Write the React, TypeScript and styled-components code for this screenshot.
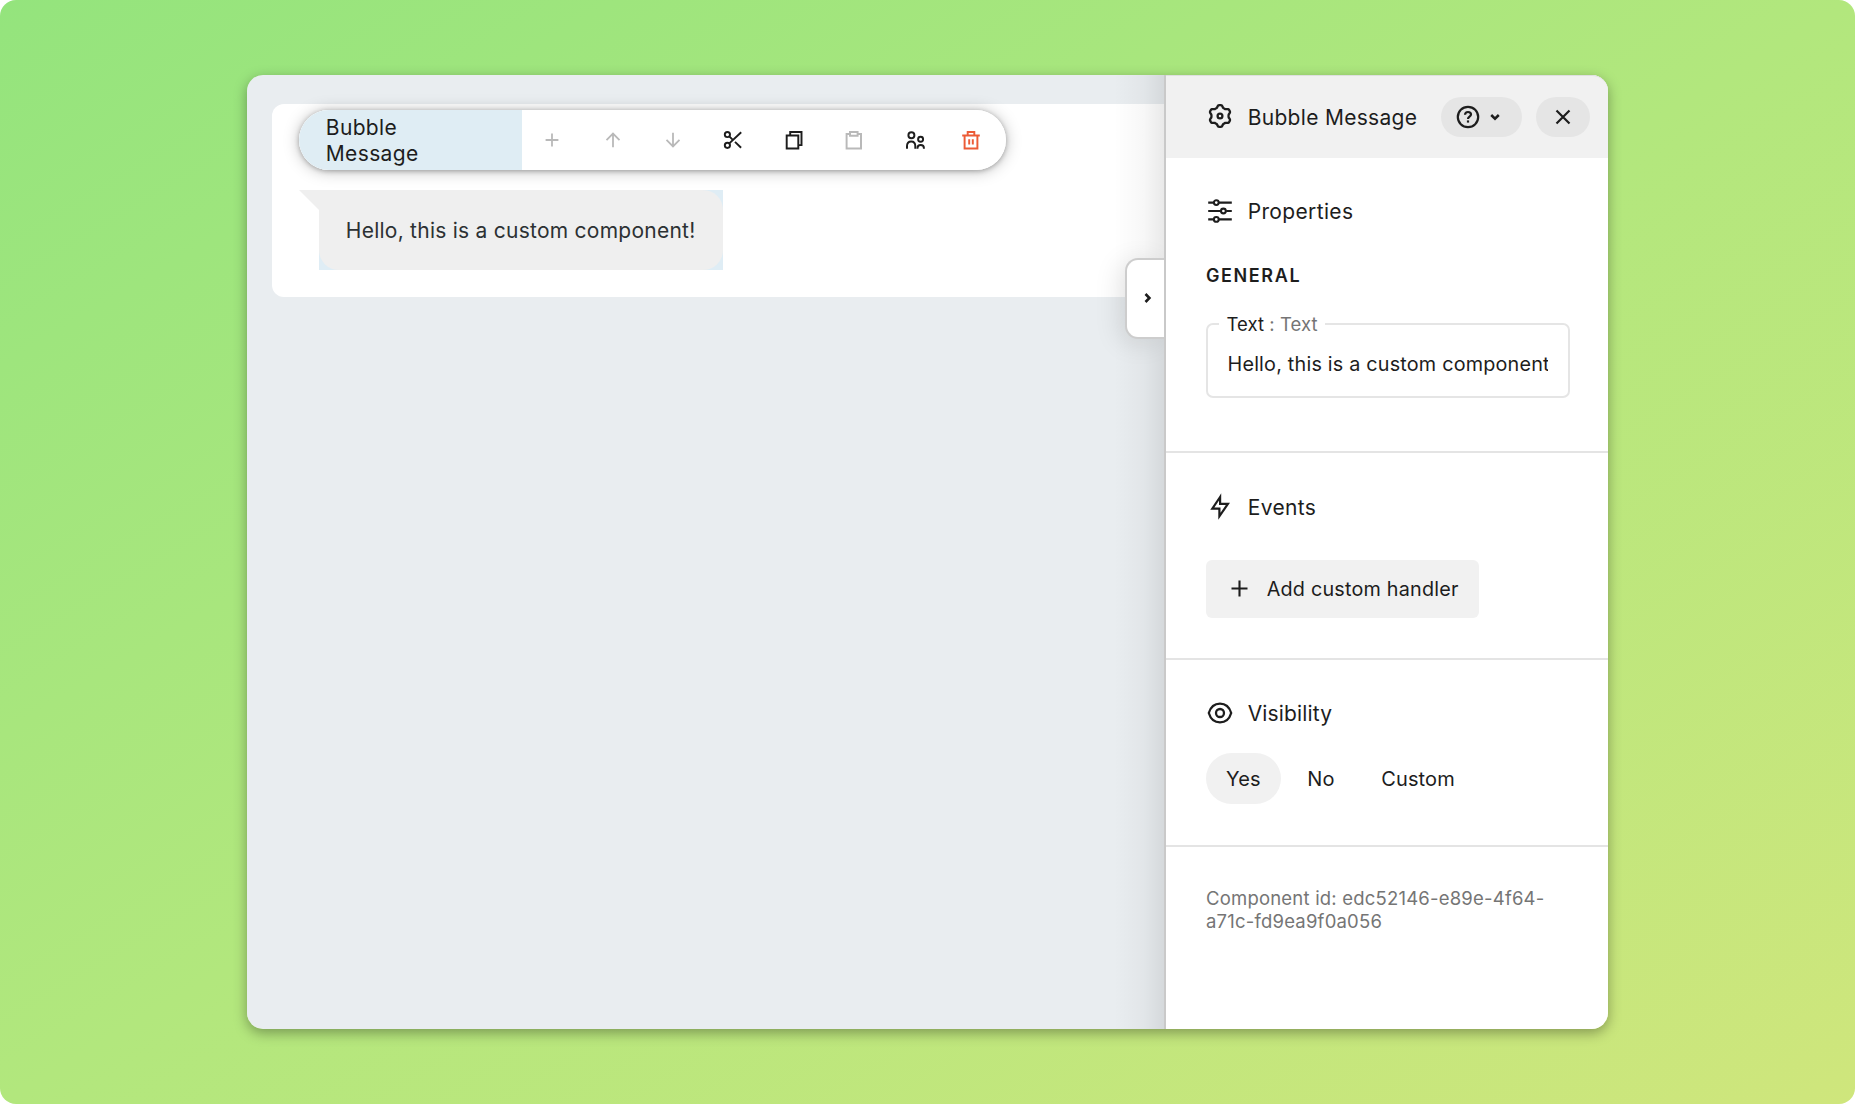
import React from "react";
import type { ReactNode } from "react";
import styled, { createGlobalStyle } from "styled-components";

const GlobalStyle = createGlobalStyle`
  *, *::before, *::after { box-sizing: border-box; }
  body { margin: 0; background: #fff; }
  button, input { font: inherit; letter-spacing: inherit; color: inherit; }
`;

const Page = styled.div`
  width: 100%;
  height: 100vh;
  padding: 75px 247px;
  border-radius: 16px;
  background: linear-gradient(to bottom right, #94e47d 0%, #b2e77d 50%, #cfe67c 100%);
  font-family: Inter, "Noto Sans", sans-serif;
  color: #1d1d1d;
`;

const Window = styled.div`
  display: flex;
  height: 954px;
  border-radius: 16px;
  box-shadow: 0 4px 13px rgba(0, 0, 0, 0.34);
`;

const Canvas = styled.main`
  flex: 1;
  min-width: 0;
  padding: 28.7px 0 0 25px;
  background: #e9edf0;
  border-radius: 16px 0 0 16px;
`;

const Block = styled.section`
  position: relative;
  height: 193.3px;
  padding: 86.3px 0 0 47px;
  background: #fff;
  border-radius: 12px 0 0 12px;
`;

const ToolbarShadow = styled.div`
  position: absolute;
  left: 27px;
  top: 6px;
  width: 707px;
  height: 60px;
  border-radius: 30px;
  box-shadow: 0 1px 16px rgba(0, 0, 0, 0.26), 0 1px 5px rgba(0, 0, 0, 0.28);
`;

const Toolbar = styled.div`
  position: absolute;
  left: 27px;
  top: 6px;
  display: flex;
  width: 707px;
  height: 60px;
  border-radius: 30px;
  background: #fff;
  overflow: hidden;
`;

const ToolbarName = styled.div`
  display: flex;
  align-items: center;
  width: 223px;
  padding: 2px 88px 0 26.8px;
  background: #dfedf4;
  font-size: 21px;
  line-height: 26px;
  letter-spacing: 0.35px;
`;

const Tools = styled.div`
  display: flex;
  align-items: center;
`;

const Tool = styled.button<{ $tone?: "muted" | "danger" }>`
  display: flex;
  align-items: center;
  justify-content: center;
  width: ${(p) => (p.$tone === "danger" ? "53px" : "60.4px")};
  height: 60px;
  padding: 0;
  border: 0;
  background: none;
  color: ${(p) => (p.$tone === "muted" ? "#b9b9b9" : p.$tone === "danger" ? "#ec5b36" : "#1d1d1d")};
`;

const Selection = styled.div`
  display: inline-block;
  height: 80px;
  background: #dfedf5;
`;

const Bubble = styled.div`
  position: relative;
  display: flex;
  align-items: center;
  width: 404px;
  height: 80px;
  padding: 1px 0 0 26.8px;
  border-radius: 0 20px 20px 20px;
  background: #efefef;
  color: #2c3133;
  font-size: 21px;
  letter-spacing: 0.25px;
  white-space: nowrap;

  &::before {
    content: "";
    position: absolute;
    left: -20px;
    top: 0;
    border: 10px solid transparent;
    border-top-color: #efefef;
    border-right-color: #efefef;
  }
`;

const Panel = styled.aside`
  position: relative;
  display: flex;
  flex-direction: column;
  width: 444px;
  border-left: 2px solid #c9c9c9;
  border-radius: 0 16px 16px 0;
  background: #fff;
`;

const PanelShade = styled.div`
  position: absolute;
  left: -52px;
  top: 0;
  bottom: 0;
  width: 50px;
  background: linear-gradient(to left, rgba(0, 0, 0, 0.085), rgba(0, 0, 0, 0.03) 40%, transparent);
  pointer-events: none;
`;

const CollapseTab = styled.button`
  position: absolute;
  left: -41px;
  top: 183px;
  display: flex;
  align-items: center;
  width: 39px;
  height: 81px;
  padding: 0 0 2px 17px;
  border: 2px solid #cdcdcd;
  border-right: 0;
  border-radius: 13px 0 0 13px;
  background: #fff;
  box-shadow: -6px 4px 26px rgba(0, 0, 0, 0.1);
  clip-path: inset(-50px 0 -50px -50px);
`;

const PanelHeader = styled.header`
  display: flex;
  align-items: flex-start;
  height: 82.5px;
  padding: 22px 18.5px 0 40px;
  border-top: 1px solid #dedfdf;
  border-radius: 0 16px 0 0;
  background: #f1f1f1;
`;

const IconSlot = styled.span`
  display: flex;
  align-items: center;
  justify-content: center;
  width: 28px;
  height: 28px;
  margin-right: 13.7px;
`;

const PanelTitle = styled.h1`
  display: flex;
  align-items: center;
  flex: 1;
  height: 36px;
  margin: 0;
  font-size: 21px;
  font-weight: 400;
  letter-spacing: 0.3px;
  white-space: nowrap;
`;

const TitleText = styled.span`
  padding-top: 3px;
`;

const HeaderButton = styled.button<{ $width: number; $shift?: number }>`
  display: flex;
  align-items: center;
  justify-content: center;
  gap: 10px;
  width: ${(p) => p.$width}px;
  height: 40px;
  margin: -1px 0 0 14px;
  padding: 0 ${(p) => p.$shift ?? 0}px 0 0;
  border: 0;
  border-radius: 20px;
  background: #e5e5e5;
`;

const Section = styled.section<{ $height: number; $top: number }>`
  height: ${(p) => p.$height}px;
  padding: ${(p) => p.$top}px 38.5px 0 40px;
  border-bottom: 2px solid #e4e4e4;
`;

const SectionTitle = styled.h2<{ $tracking?: number }>`
  display: flex;
  align-items: center;
  height: 28px;
  margin: 0;
  font-size: 21px;
  font-weight: 400;
  line-height: 28px;
  letter-spacing: ${(p) => p.$tracking ?? 0.35}px;
`;

const TitleLabel = styled.span`
  padding-top: 2px;
`;

const GroupTitle = styled.h3`
  margin: 39px 0 0;
  font-size: 18px;
  font-weight: 600;
  line-height: 24px;
  letter-spacing: 1.6px;
`;

const Field = styled.fieldset`
  height: 86px;
  margin: 24px 0 0;
  padding: 0 19.5px;
  border: 2px solid #e5e5e5;
  border-radius: 7px;
`;

const FieldLabel = styled.legend`
  margin-left: -8.5px;
  padding: 0 7px 0 7.5px;
  font-size: 18.5px;
  line-height: 24px;
  letter-spacing: 0.05px;
`;

const Muted = styled.span`
  color: #757575;
`;

const FieldInput = styled.input`
  display: block;
  width: 100%;
  height: 30px;
  margin-top: 12.5px;
  padding: 0;
  border: 0;
  outline: 0;
  background: none;
  font-size: 19.8px;
  letter-spacing: 0.2px;
`;

const AddButton = styled.button`
  display: flex;
  align-items: center;
  gap: 18.7px;
  width: 273px;
  height: 58px;
  margin-top: 39px;
  padding: 0 0 0 25px;
  border: 0;
  border-radius: 6px;
  background: #f1f1f1;
  font-size: 19.8px;
  letter-spacing: 0.2px;
  white-space: nowrap;
`;

const Options = styled.div`
  display: flex;
  gap: 6px;
  margin-top: 26px;
`;

const Option = styled.button<{ $active?: boolean }>`
  height: 51px;
  padding: 0 20.4px 0 20.1px;
  border: 0;
  border-radius: 26px;
  background: ${(p) => (p.$active ? "#f1f1f1" : "transparent")};
  font-size: 20px;
  letter-spacing: 0.15px;
`;

const ComponentId = styled.p`
  width: 350px;
  margin: 40.500px 0 0 40px;
  color: #757575;
  font-size: 18.5px;
  line-height: 22.5px;
  letter-spacing: 0.2px;
`;

interface IconProps {
  w?: number;
  h?: number;
  sw?: number;
  children: ReactNode;
}

const Icon = ({ w = 24, h = 24, sw = 1.95, children }: IconProps) => (
  <svg width={w} height={h} viewBox={`0 0 ${w} ${h}`} fill="none" stroke="currentColor" strokeWidth={sw}>
    {children}
  </svg>
);

const PlusIcon = () => (
  <Icon sw={1.8}><path d="M12 5.6v12.800M5.600 12h12.800" /></Icon>
);
const UpIcon = () => (
  <Icon sw={1.8}><path d="M12 19.3V5.6M5.5 12.100 12 5.600l6.500 6.500" /></Icon>
);
const DownIcon = () => (
  <Icon sw={1.8}><path d="M12 4.700v13.700M5.500 11.900l6.500 6.500 6.500-6.500" /></Icon>
);
const CutIcon = () => (
  <Icon>
    <circle cx="6.4" cy="6.5" r="2.6" />
    <circle cx="6.4" cy="17.3" r="2.6" />
    <path d="M8.300 15.400 20.200 4.200M8.300 8.400l3.800 3.700M14 13.900l6.100 5.800" />
  </Icon>
);
const CopyIcon = () => (
  <Icon>
    <path d="M4.700 7.400h11.600v13H4.700zM8.200 7.400V3.900h11.300v13.200h-3.200" />
  </Icon>
);
const PasteIcon = () => (
  <Icon>
    <path d="M8 6H4.600v14.400H19V6h-3.400" />
    <path d="M8 4h7.600v3.800H8z" />
  </Icon>
);
const UsersIcon = () => (
  <Icon>
    <circle cx="8.4" cy="7.3" r="3" />
    <path d="M4 20.800v-2.700c0-3 1.700-4.600 4.200-4.600s4.100 1.600 4.100 4.600v2.700" />
    <circle cx="17.6" cy="11.3" r="2.5" />
    <path d="M14.500 20.800v-.800c0-2 1.200-3.100 3.200-3.100s3.200 1.100 3.200 3.100v.800" />
  </Icon>
);
const TrashIcon = () => (
  <Icon>
    <path d="M3.200 7.400h17.600M8.700 7.200V3.900h6.600v3.300M5.600 7.600v12.800h12.800V7.600M10.200 11.300v5.200M13.800 11.300v5.200" />
  </Icon>
);

const gearPath = Array.from({ length: 96 }, (_, i) => {
  const a = (i / 96) * Math.PI * 2 - Math.PI / 2;
  const wave = Math.tanh(1.7 * Math.cos(6 * (a + Math.PI / 2))) / Math.tanh(1.7);
  const r = 9.75 + 1.2 * wave;
  return `${i ? "L" : "M"}${(14 + r * Math.cos(a)).toFixed(2)} ${(14 + r * Math.sin(a)).toFixed(2)}`;
}).join("") + "Z";

const GearIcon = () => (
  <Icon w={28} h={28} sw={2.3}>
    <path d={gearPath} strokeLinejoin="round" />
    <circle cx="14" cy="14" r="2.4" />
  </Icon>
);
const SlidersIcon = () => (
  <Icon w={28} h={28} sw={2.1}>
    <path d="M2.200 5.600h5.500M13 5.600h12.800M2.200 14h12.500M20.200 14h5.600M2.200 22.400h5.500M13 22.400h12.800" />
    <circle cx="10.3" cy="5.6" r="2.4" />
    <circle cx="17.4" cy="14" r="2.4" />
    <circle cx="10.3" cy="22.4" r="2.4" />
  </Icon>
);
const BoltIcon = () => (
  <Icon w={28} h={28} sw={2.2}>
    <path d="M14.100 4 6.300 15.700h7.100v7.600L21.900 10.900h-7.800z" />
  </Icon>
);
const EyeIcon = () => (
  <Icon w={28} h={28} sw={2.3}>
    <path d="M2.800 14C4.500 8.300 8.800 4.600 14 4.600S23.500 8.300 25.200 14C23.500 19.700 19.200 23.400 14 23.400S4.500 19.700 2.800 14z" />
    <circle cx="14" cy="14" r="4" />
  </Icon>
);
const HelpIcon = () => (
  <Icon w={24} h={24} sw={2.2}>
    <circle cx="12" cy="12" r="10.2" />
    <path d="M9 9.800C9.100 8 10.300 7 12 7s3 1 3 2.600c0 2-3 2.200-3 4.300" />
    <path d="M12 15.400v2.200" />
  </Icon>
);
const ChevronDown = () => (
  <Icon w={10} h={8} sw={2.5}><path d="M1.200 2 5 5.700 8.800 2" /></Icon>
);
const ChevronRight = () => (
  <Icon w={8} h={12} sw={2.6}><path d="M1.500 2 5.400 6 1.500 10" /></Icon>
);
const CloseIcon = () => (
  <Icon w={16} h={16} sw={2.2}><path d="M1.500 1.500l13 13M14.500 1.500l-13 13" /></Icon>
);
const AddIcon = () => (
  <Icon w={17} h={17} sw={2.1}><path d="M8.500.500v16M.500 8.500h16" /></Icon>
);

export default function App() {
  return (
    <>
      <GlobalStyle />
      <Page>
        <Window>
          <Canvas>
            <Block>
              <ToolbarShadow />
              <Toolbar>
                <ToolbarName>Bubble Message</ToolbarName>
                <Tools>
                  <Tool $tone="muted" aria-label="Add"><PlusIcon /></Tool>
                  <Tool $tone="muted" aria-label="Move up"><UpIcon /></Tool>
                  <Tool $tone="muted" aria-label="Move down"><DownIcon /></Tool>
                  <Tool aria-label="Cut"><CutIcon /></Tool>
                  <Tool aria-label="Copy"><CopyIcon /></Tool>
                  <Tool $tone="muted" aria-label="Paste"><PasteIcon /></Tool>
                  <Tool aria-label="Roles"><UsersIcon /></Tool>
                  <Tool $tone="danger" aria-label="Delete"><TrashIcon /></Tool>
                </Tools>
              </Toolbar>
              <Selection>
                <Bubble>Hello, this is a custom component!</Bubble>
              </Selection>
            </Block>
          </Canvas>
          <Panel>
            <PanelShade />
            <CollapseTab aria-label="Collapse"><ChevronRight /></CollapseTab>
            <PanelHeader>
              <PanelTitle>
                <IconSlot><GearIcon /></IconSlot>
                <TitleText>Bubble Message</TitleText>
              </PanelTitle>
              <HeaderButton $width={81} $shift={7} aria-label="Help">
                <HelpIcon />
                <ChevronDown />
              </HeaderButton>
              <HeaderButton $width={54} aria-label="Close"><CloseIcon /></HeaderButton>
            </PanelHeader>
            <Section $height={295.5} $top={39.5}>
              <SectionTitle>
                <IconSlot><SlidersIcon /></IconSlot>
                <TitleLabel>Properties</TitleLabel>
              </SectionTitle>
              <GroupTitle>GENERAL</GroupTitle>
              <Field>
                <FieldLabel>Text <Muted>: Text</Muted></FieldLabel>
                <FieldInput defaultValue="Hello, this is a custom component!" />
              </Field>
            </Section>
            <Section $height={207} $top={39.5}>
              <SectionTitle>
                <IconSlot><BoltIcon /></IconSlot>
                <TitleLabel>Events</TitleLabel>
              </SectionTitle>
              <AddButton>
                <AddIcon />
                Add custom handler
              </AddButton>
            </Section>
            <Section $height={186.5} $top={39}>
              <SectionTitle $tracking={0.15}>
                <IconSlot><EyeIcon /></IconSlot>
                <TitleLabel>Visibility</TitleLabel>
              </SectionTitle>
              <Options>
                <Option $active>Yes</Option>
                <Option>No</Option>
                <Option>Custom</Option>
              </Options>
            </Section>
            <ComponentId>Component id: edc52146-e89e-4f64-a71c-fd9ea9f0a056</ComponentId>
          </Panel>
        </Window>
      </Page>
    </>
  );
}
